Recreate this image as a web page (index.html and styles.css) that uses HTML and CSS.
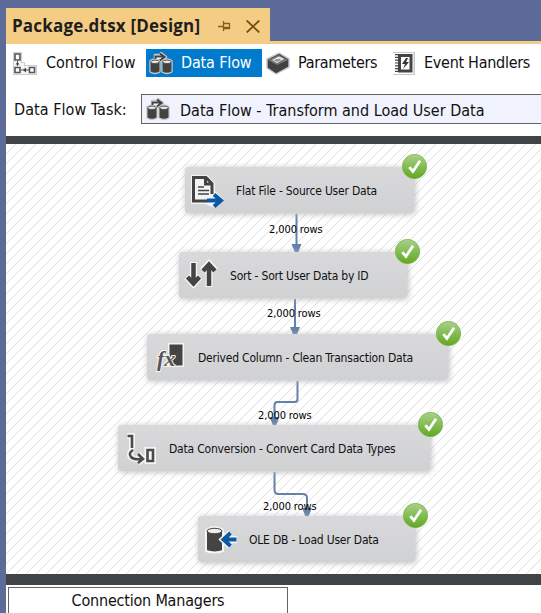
FILE: index.html
```html
<!DOCTYPE html>
<html lang="en">
<head>
<meta charset="utf-8">
<title>Package.dtsx</title>
<link rel="stylesheet" href="styles.css">
</head>
<body>
<svg class="defs" width="0" height="0">
  <defs>
    <linearGradient id="green" x1="0" y1="0" x2="0" y2="1"><stop offset="0" stop-color="#aad08a"/><stop offset=".5" stop-color="#83bd55"/><stop offset="1" stop-color="#62a71f"/></linearGradient>
    <symbol id="check" viewBox="0 0 24 24"><circle cx="12" cy="12" r="11.7" fill="url(#green)" stroke="#6fae3c" stroke-width=".6"/><path d="M7 12.5l3.5 4.3L17.3 6.5" fill="none" stroke="#fff" stroke-width="2.7"/></symbol>
    <symbol id="flow" viewBox="0 0 24 23">
      <path d="M1.500 9v10.500q4.500 3 9 0V9q-4.500-3-9 0zM13.500 9v10.500q4.500 3 9 0V9q-4.500-3-9 0zM6 6V3h6V1l5 4-5 4V6z" stroke="#c9c9c9" stroke-width="2.400" fill="#c9c9c9" stroke-linejoin="round"/>
      <path d="M6 7V4h6V2l4 3.200-4 3.500V6z" fill="#fff" stroke="#fff"/>
      <path d="M6.500 7V4.500H14M11 1.500l4.500 3.500L11 8.500" fill="none" stroke="#424242" stroke-width="2"/>
      <path d="M1.500 9.500v10q4.500 2.500 9 0v-10zM13.500 9.500v10q4.500 2.500 9 0v-10z" fill="#424242"/>
      <g fill="#eee" stroke="#555"><ellipse cx="6" cy="9.800" rx="4.300" ry="1.700"/><ellipse cx="18" cy="9.800" rx="4.300" ry="1.700"/></g>
    </symbol>
  </defs>
</svg>
<div class="window">
  <header class="strip">
    <div class="doc-tab"><span class="doc-name">Package.dtsx [Design]</span>
      <svg class="pin" width="13" height="10" viewBox="0 0 13 10" fill="none" stroke="#875a20"><path d="M0 5.500h5M5.500 0v10M6 2.500h5.500v5H6M6 6.500h6" stroke-width="1.300"/></svg>
      <svg width="14" height="13" viewBox="0 0 14 13" fill="none" stroke="#7a4d18" stroke-width="1.800"><path d="M.7.500l12.600 12M13.300.500L.7 12.500"/></svg>
    </div>
  </header>
  <nav class="tabs">
    <div class="tab t1"><svg width="24" height="23" viewBox="0 0 24 23"><path d="M0 0h9v10h3v3h12v10H0z" fill="#ccc"/><path d="M1 1h7v10h3v3h12v8H1z" fill="#f4f4f4"/><g fill="#fff" stroke="#555" stroke-width="1.600"><path d="M2 2h5v6H2zM2 15.500h5v5H2zM16.500 15.500h5v5h-5z"/></g><path d="M4.500 9v5M8 18h8" stroke="#555"/><path d="M2.500 12.500l2-2.500 2 2.500zM13 15.500L10 18l3 2.500z" fill="#444"/></svg><span>Control Flow</span></div>
    <div class="tab t2"><svg width="24" height="23"><use href="#flow"/></svg><span>Data Flow</span></div>
    <div class="tab t3"><svg width="24" height="23" viewBox="0 0 24 23"><path d="M1 7L13 1l10 6v8L10 22 1 16z" fill="#424242" stroke="#c8c8c8" stroke-width="1.400"/><path d="M2 8l11-5 9 5-11 5z" fill="#777"/><path d="M6 8l7-3.500L18 7l-7 4z" fill="#f4f4f4"/><path d="M7 8l6-1.500 3 1.500-5 2z" fill="#999"/></svg><span>Parameters</span></div>
    <div class="tab t4"><svg width="22" height="23" viewBox="0 0 22 23"><path d="M0 0h22v23H0z" fill="#c8c8c8"/><path d="M0 1h20.500v21H0z" fill="#fff"/><path d="M5 2h14.500v18.500H5z" fill="#444"/><path d="M8 5h8.500v12.500H8z" fill="#fff"/><path d="M13 6l-4 6h3l-2 5 6-7h-3l2-4z" fill="#333"/><path d="M3.500 2v19" stroke="#444" stroke-width="3" stroke-dasharray="1.200 1.600"/></svg><span>Event Handlers</span></div>
  </nav>
  <section class="task"><label>Data Flow Task:</label><div class="combo"><svg width="24" height="23"><use href="#flow"/></svg><span>Data Flow - Transform and Load User Data</span></div></section>
  <main class="canvas">
    <svg class="edges" width="535" height="430" viewBox="6 144 535 430">
      <defs><pattern id="hatch" width="10" height="10" patternUnits="userSpaceOnUse" x="6" y="144"><path d="M-1 11L11-1M-1 1L1-1M9 11l2-2" stroke="#dedede" stroke-width="1"/></pattern></defs>
      <path d="M6 144h535v430H6z" fill="url(#hatch)"/>
      <g fill="none" stroke="#6581aa" stroke-width="2"><path d="M296.500 214v32M295 299v31M297.500 381v18q0 3-3 3h-17q-3 0-3 3v14M274.500 472v18q0 4 4 4h24q4.500 0 4.500 4v12"/></g>
      <path d="M291.500 244h10l-3.500 8.500h-3zM290 327h10l-3.500 8.500h-3zM269.500 417h10l-3.500 8.500h-3zM302 508h10l-3.500 8.500h-3z" fill="#6581aa"/>
    </svg>
    <span class="rows r1">2,000 rows</span><span class="rows r2">2,000 rows</span><span class="rows r3">2,000 rows</span><span class="rows r4">2,000 rows</span>
    <div class="node n1"><svg width="36" height="36" viewBox="0 0 36 36"><path d="M3 3h16l8 8v8l9 9-9 8-10-4H3z" fill="#f4f4f4"/><path d="M5.500 5.500H18l6 6V22M5.500 4v25H19M17.500 5v7H25" fill="none" stroke="#444" stroke-width="3"/><path d="M10 15h6M10 18.500h11M10 22h11" stroke="#444" stroke-width="1.600"/><path d="M19 28.500h12M26 22.500l7 6-7 6" fill="none" stroke="#0b59a5" stroke-width="4"/></svg><span>Flat File - Source User Data</span><svg class="ok"><use href="#check"/></svg></div>
    <div class="node n2"><svg width="36" height="36" viewBox="0 0 36 36"><g fill="none" stroke="#f5f5f5" stroke-width="7"><path d="M11.500 5v22M5 19.500l6.500 7 6.500-7M27 30V7M20.500 14l6.500-7 6.500 7"/></g><g fill="none" stroke="#444" stroke-width="4.500"><path d="M11.500 6v21M5.500 20l6 6.500 6-6.500M27 29V8M21 14l6-6.500 6 6.500"/></g></svg><span>Sort - Sort User Data by ID</span><svg class="ok"><use href="#check"/></svg></div>
    <div class="node n3"><svg width="36" height="36" viewBox="0 0 36 36"><path d="M18 4h16v24H18z" fill="#f5f5f5"/><path d="M19.500 5.500h13v21h-13z" fill="#444"/><text class="fx" x="7" y="27">fx</text></svg><span>Derived Column - Clean Transaction Data</span><svg class="ok"><use href="#check"/></svg></div>
    <div class="node n4"><svg width="36" height="36" viewBox="0 0 36 36"><g fill="none" stroke="#f6f6f6" stroke-width="6"><path d="M6 6h5v13M12 20q-5 3-2 7 3 3 11 2M17 24l5 5-5 4M26.500 20h5.500v11h-5.500z"/></g><g fill="none" stroke="#4b4b4b" stroke-width="2.600"><path d="M6.500 6h4.500v12M12 20q-5 3-2 7 3 3 11 2M17 24l5 5-5 4M26.500 20h5.500v11h-5.500z"/></g></svg><span>Data Conversion - Convert Card Data Types</span><svg class="ok"><use href="#check"/></svg></div>
    <div class="node n5"><svg width="36" height="36" viewBox="0 0 36 36"><path d="M5 9q9-6 17 0v21q-8 3-17 0z" fill="#444" stroke="#f5f5f5" stroke-width="2"/><ellipse cx="13.500" cy="10" rx="7.500" ry="2.700" fill="#eee" stroke="#444"/><path d="M36 18.500H24M29.500 12l-7 6.500 7 6.500" fill="none" stroke="#f5f5f5" stroke-width="7"/><path d="M35.500 18.500H24M29.500 12l-7 6.500 7 6.500" fill="none" stroke="#0b59a5" stroke-width="4"/></svg><span>OLE DB - Load User Data</span><svg class="ok"><use href="#check"/></svg></div>
  </main>
  <footer class="bottom"><div class="managers">Connection Managers</div></footer>
</div>
</body>
</html>
```
FILE: styles.css
```css
* { box-sizing: border-box; }
body { margin: 0; width: 541px; height: 613px; overflow: hidden; background: #5d6b99; color: #111; font: 16px/20px "DejaVu Sans Condensed", "DejaVu Sans", sans-serif; font-stretch: condensed; }
span, label { white-space: nowrap; }
svg { flex: none; display: block; }
.defs { position: absolute; }
.window { margin-left: 6px; height: 613px; display: flex; flex-direction: column; background: #fff; }
.strip { height: 44px; flex: none; padding-top: 8px; background: #5d6b99; border-bottom: 3px solid #f5cc84; }
.doc-tab { width: 264px; height: 36px; display: flex; align-items: center; padding: 0 10px 0 6px; background: #f5cc84; }
.doc-name { font: bold 17px/24px "Open Sans", sans-serif; letter-spacing: .2px; width: 206px; color: #1e1e1e; }
.pin { margin-right: 15px; }
.tabs { display: flex; height: 40px; padding: 5px 0 7px 7px; flex: none; }
.tab { display: flex; align-items: center; height: 28px; gap: 9px; }
.t1 { width: 133px; }
.t2 { width: 116px; background: #007acc; color: #fff; padding-left: 3px; gap: 8px; letter-spacing: -.15px; }
.t3 { width: 131px; padding-left: 4px; gap: 8px; letter-spacing: -.3px; }
.t4 { gap: 9px; letter-spacing: -.28px; }
.task { display: flex; height: 52px; flex: none; padding: 10px 0 0 8px; }
.task label { width: 127px; padding-top: 6px; letter-spacing: .05px; }
.combo { flex: 1; height: 30px; display: flex; align-items: center; gap: 10px; padding-left: 4px; border: 1px solid #646464; border-right: 0; background: #f0f3fd; }
.combo span { padding-top: 3px; }
.canvas { position: relative; height: 449px; flex: none; border: solid #404447; border-width: 8px 0 11px; background: #fff; overflow: hidden; }
.edges { position: absolute; left: 0; top: 0; }
.rows { position: absolute; font-size: 11px; line-height: 14px; letter-spacing: -.1px; color: #000; }
.r1 { left: 263px; top: 79px; } .r2 { left: 261px; top: 163px; } .r3 { left: 252px; top: 265px; } .r4 { left: 257px; top: 356px; }
.node { position: absolute; height: 46px; display: flex; align-items: center; padding-left: 3px; gap: 12px; font-size: 12px; letter-spacing: -.2px; border-radius: 3px; background: linear-gradient(#d9d9db, #d0d1d3); box-shadow: 1px 1px 6px #bbb; }
.node span { padding-top: 2px; }
.n1 { left: 179px; top: 23px; width: 229px; }
.n2 { left: 173px; top: 108px; width: 228px; }
.n3 { left: 141px; top: 190px; width: 301px; }
.n4 { left: 112px; top: 281px; width: 312px; }
.n5 { left: 192px; top: 372px; width: 217px; }
.ok { position: absolute; right: -13px; top: -13px; width: 25px; height: 25px; }
.fx { font: italic bold 22px "Liberation Serif", serif; letter-spacing: 0; fill: #555; stroke: #f5f5f5; stroke-width: 2px; paint-order: stroke; }
.bottom { height: 28px; padding: 2px; }
.managers { width: 280px; height: 30px; border: 1px solid #646464; text-align: center; line-height: 25px; letter-spacing: -.2px; }
```
